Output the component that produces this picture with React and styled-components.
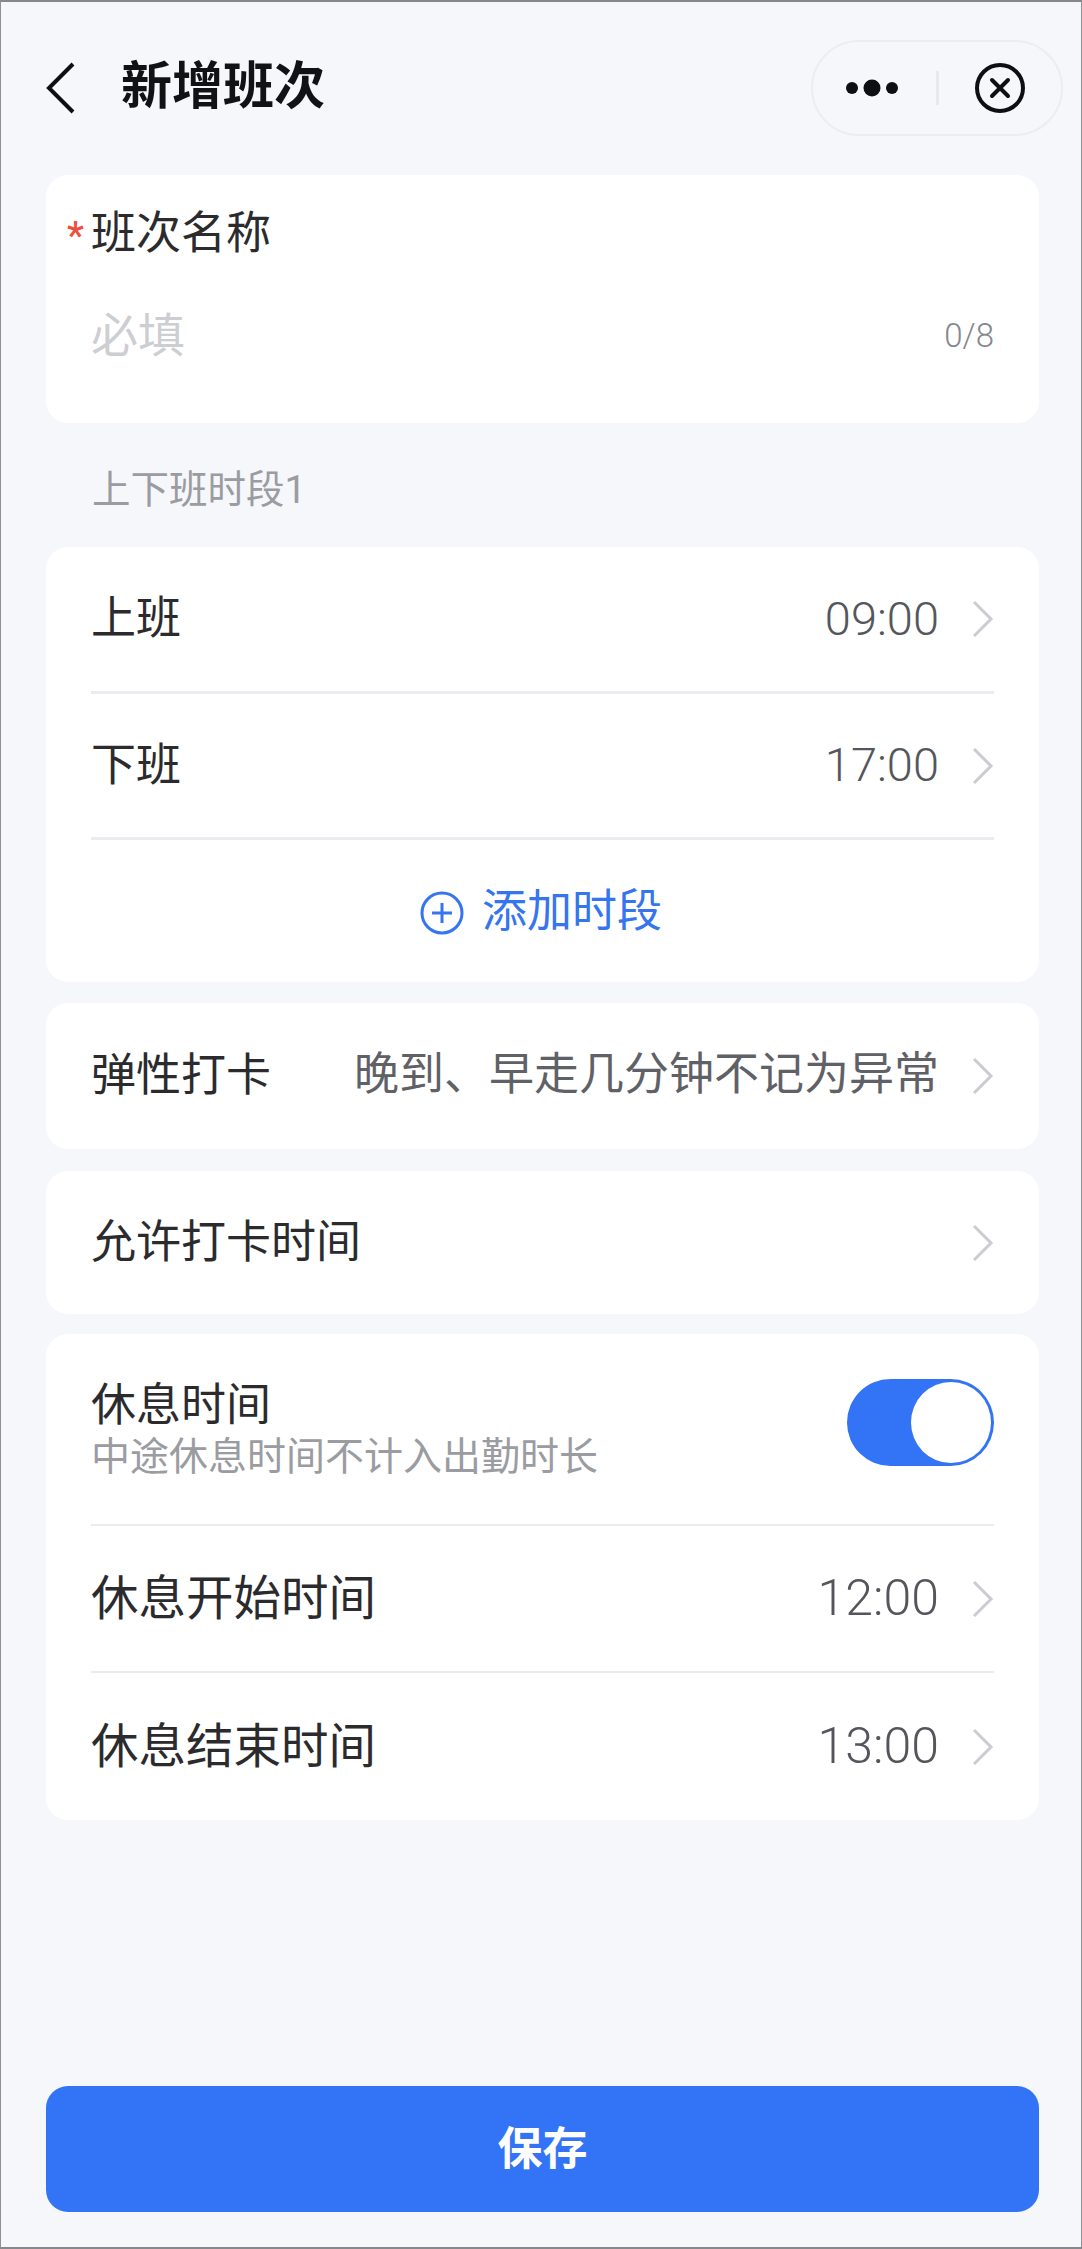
import styled, { createGlobalStyle } from "styled-components";

const GlobalStyle = createGlobalStyle`
  * {
    box-sizing: border-box;
  }
  html, body {
    margin: 0;
    padding: 0;
    background: #f6f7fb;
  }
`;

const FONT = `Roboto, "Noto Sans CJK SC", sans-serif`;

// Page shell
const Page = styled.div`
  width: 1082px;
  height: 2249px;
  display: flex;
  flex-direction: column;
  background: #f6f7fb;
  border: 1px solid #8d9098;
  border-top: 2px solid #85878c;
  border-bottom: 2px solid #85878c;
  padding: 0 42px 35px 45px;
  font-family: ${FONT};
  color: #2b2b2e;
`;

const Header = styled.div`
  height: 173px;
  display: flex;
  align-items: flex-start;
  margin-right: -24px;
  padding-top: 38px;
`;

const BackIcon = styled.svg`
  width: 30px;
  height: 52px;
  margin-top: 22px;
  flex: none;
`;

const Title = styled.div`
  margin-left: 45px;
  font-size: 51px;
  line-height: 94px;
  font-weight: 700;
  color: #111214;
  flex: 1;
`;

const Capsule = styled.div`
  width: 252px;
  height: 96px;
  border: 2px solid #ecedf1;
  border-radius: 48px;
  display: flex;
  align-items: center;
  padding-left: 33px;
`;

const CapsuleLine = styled.div`
  width: 3px;
  height: 34px;
  background: #e8e9ed;
  margin: 0 36px 0 22px;
`;

const Card = styled.div`
  background: #fff;
  border-radius: 22px;
  padding: 0 45px;
  margin-bottom: ${(p) => p.$gap || 0}px;
`;

const NameCard = styled(Card)`
  height: 248px;
  padding-top: 30px;
`;

const NameLabel = styled.div`
  display: flex;
  align-items: center;
  height: 58px;
  font-size: 45px;
  line-height: 58px;
`;

const Star = styled.span`
  color: #ee4d3f;
  font-size: 38px;
  font-weight: 500;
  line-height: 38px;
  margin-left: -24px;
  width: 24px;
  padding-top: 4px;
`;

const NameInput = styled.div`
  display: flex;
  align-items: center;
  justify-content: space-between;
  margin-top: 33px;
  height: 70px;
`;

const Placeholder = styled.span`
  font-size: 47px;
  color: #cdced2;
`;

const Counter = styled.span`
  font-size: 33px;
  font-weight: 300;
  color: #85878e;
  padding-top: 8px;
`;

const SectionLabel = styled.div`
  height: 124px;
  padding: 26px 0 0 46px;
  font-size: 38.5px;
  line-height: 82px;
  color: #9a9ca1;
`;

const Row = styled.div`
  height: ${(p) => p.$h}px;
  display: flex;
  align-items: center;
  font-size: ${(p) => p.$size || 45}px;
`;

const RowLabel = styled.span`
  flex: 1;
  white-space: nowrap;
  margin-bottom: 9px;
`;

const RowValue = styled.span`
  font-size: ${(p) => p.$size || 47}px;
  font-weight: 300;
  color: #55565c;
  white-space: nowrap;
  margin-bottom: 2px;
`;

const RowHint = styled.span`
  font-size: 45px;
  color: #606167;
  white-space: nowrap;
  margin-bottom: 12px;
`;

const Chevron = styled.svg`
  width: 22px;
  height: 38px;
  margin-left: 33px;
  flex: none;
`;

const Divider = styled.div`
  height: ${(p) => p.$h || 3}px;
  background: #ebebf0;
`;

const AddRow = styled.div`
  height: 142px;
  display: flex;
  align-items: center;
  justify-content: center;
  gap: 18px;
  font-size: 45px;
  color: #3575ee;
  padding: 0 3px 8px 0;
`;

const PlusIcon = styled.svg`
  width: 44px;
  height: 44px;
  margin-top: 12px;
`;

const RestHead = styled.div`
  height: 190px;
  display: flex;
  align-items: center;
  justify-content: space-between;
`;

const RestText = styled.div`
  display: flex;
  flex-direction: column;
  padding-bottom: 2px;
`;

const RestTitle = styled.div`
  font-size: 45px;
  line-height: 58px;
`;

const RestSub = styled.div`
  font-size: 39px;
  line-height: 44px;
  color: #9a9ca1;
`;

const Switch = styled.div`
  width: 147px;
  height: 87px;
  border-radius: 44px;
  background: #3374f6;
  display: flex;
  justify-content: flex-end;
  align-items: center;
  padding-right: 3px;
  margin-bottom: 14px;
`;

const Thumb = styled.div`
  width: 80px;
  height: 81px;
  border-radius: 50%;
  background: #fff;
`;

const SaveButton = styled.div`
  margin-top: auto;
  height: 126px;
  border-radius: 22px;
  background: #3374f6;
  color: #fff;
  font-size: 45px;
  font-weight: 700;
  display: flex;
  align-items: center;
  justify-content: center;
  padding-bottom: 8px;
`;

const Arrow = () => (
  <Chevron viewBox="0 0 22 38">
    <polyline
      points="2,2 19,19 2,36"
      fill="none"
      stroke="#cbccd1"
      strokeWidth="3"
    />
  </Chevron>
);

export default function App() {
  return (
    <>
      <GlobalStyle />
      <Page>
        <Header>
          <BackIcon viewBox="0 0 30 52">
            <polyline
              points="27,2 3,26 27,50"
              fill="none"
              stroke="#0e0f11"
              strokeWidth="4"
            />
          </BackIcon>
          <Title>新增班次</Title>
          <Capsule>
            <svg width="68" height="20" viewBox="0 0 68 20">
              <circle cx="6" cy="10" r="6" fill="#0e0f11" />
              <circle cx="26" cy="10" r="8.5" fill="#0e0f11" />
              <circle cx="46" cy="10" r="6" fill="#0e0f11" />
            </svg>
            <CapsuleLine />
            <svg width="50" height="50" viewBox="0 0 50 50">
              <circle cx="25" cy="25" r="23" fill="none" stroke="#0e0f11" strokeWidth="4" />
              <path d="M17 17 L33 33 M33 17 L17 33" stroke="#0e0f11" strokeWidth="4" strokeLinecap="round" />
            </svg>
          </Capsule>
        </Header>

        <NameCard>
          <NameLabel>
            <Star>*</Star>
            班次名称
          </NameLabel>
          <NameInput>
            <Placeholder>必填</Placeholder>
            <Counter>0/8</Counter>
          </NameInput>
        </NameCard>

        <SectionLabel>上下班时段1</SectionLabel>

        <Card $gap={21}>
          <Row $h={144}>
            <RowLabel>上班</RowLabel>
            <RowValue>09:00</RowValue>
            <Arrow />
          </Row>
          <Divider />
          <Row $h={143}>
            <RowLabel>下班</RowLabel>
            <RowValue>17:00</RowValue>
            <Arrow />
          </Row>
          <Divider />
          <AddRow>
            <PlusIcon viewBox="0 0 44 44">
              <circle cx="22" cy="22" r="20" fill="none" stroke="#3575ee" strokeWidth="3" />
              <path d="M12 22 H32 M22 12 V32" stroke="#3575ee" strokeWidth="3" />
            </PlusIcon>
            添加时段
          </AddRow>
        </Card>

        <Card $gap={22}>
          <Row $h={146}>
            <RowLabel>弹性打卡</RowLabel>
            <RowHint>晚到、早走几分钟不记为异常</RowHint>
            <Arrow />
          </Row>
        </Card>

        <Card $gap={20}>
          <Row $h={143}>
            <RowLabel>允许打卡时间</RowLabel>
            <Arrow />
          </Row>
        </Card>

        <Card>
          <RestHead>
            <RestText>
              <RestTitle>休息时间</RestTitle>
              <RestSub>中途休息时间不计入出勤时长</RestSub>
            </RestText>
            <Switch>
              <Thumb />
            </Switch>
          </RestHead>
          <Divider $h={2} />
          <Row $h={145} $size={47.5}>
            <RowLabel>休息开始时间</RowLabel>
            <RowValue $size={50}>12:00</RowValue>
            <Arrow />
          </Row>
          <Divider $h={2} />
          <Row $h={147} $size={47.5}>
            <RowLabel>休息结束时间</RowLabel>
            <RowValue $size={50}>13:00</RowValue>
            <Arrow />
          </Row>
        </Card>

        <SaveButton>保存</SaveButton>
      </Page>
    </>
  );
}
